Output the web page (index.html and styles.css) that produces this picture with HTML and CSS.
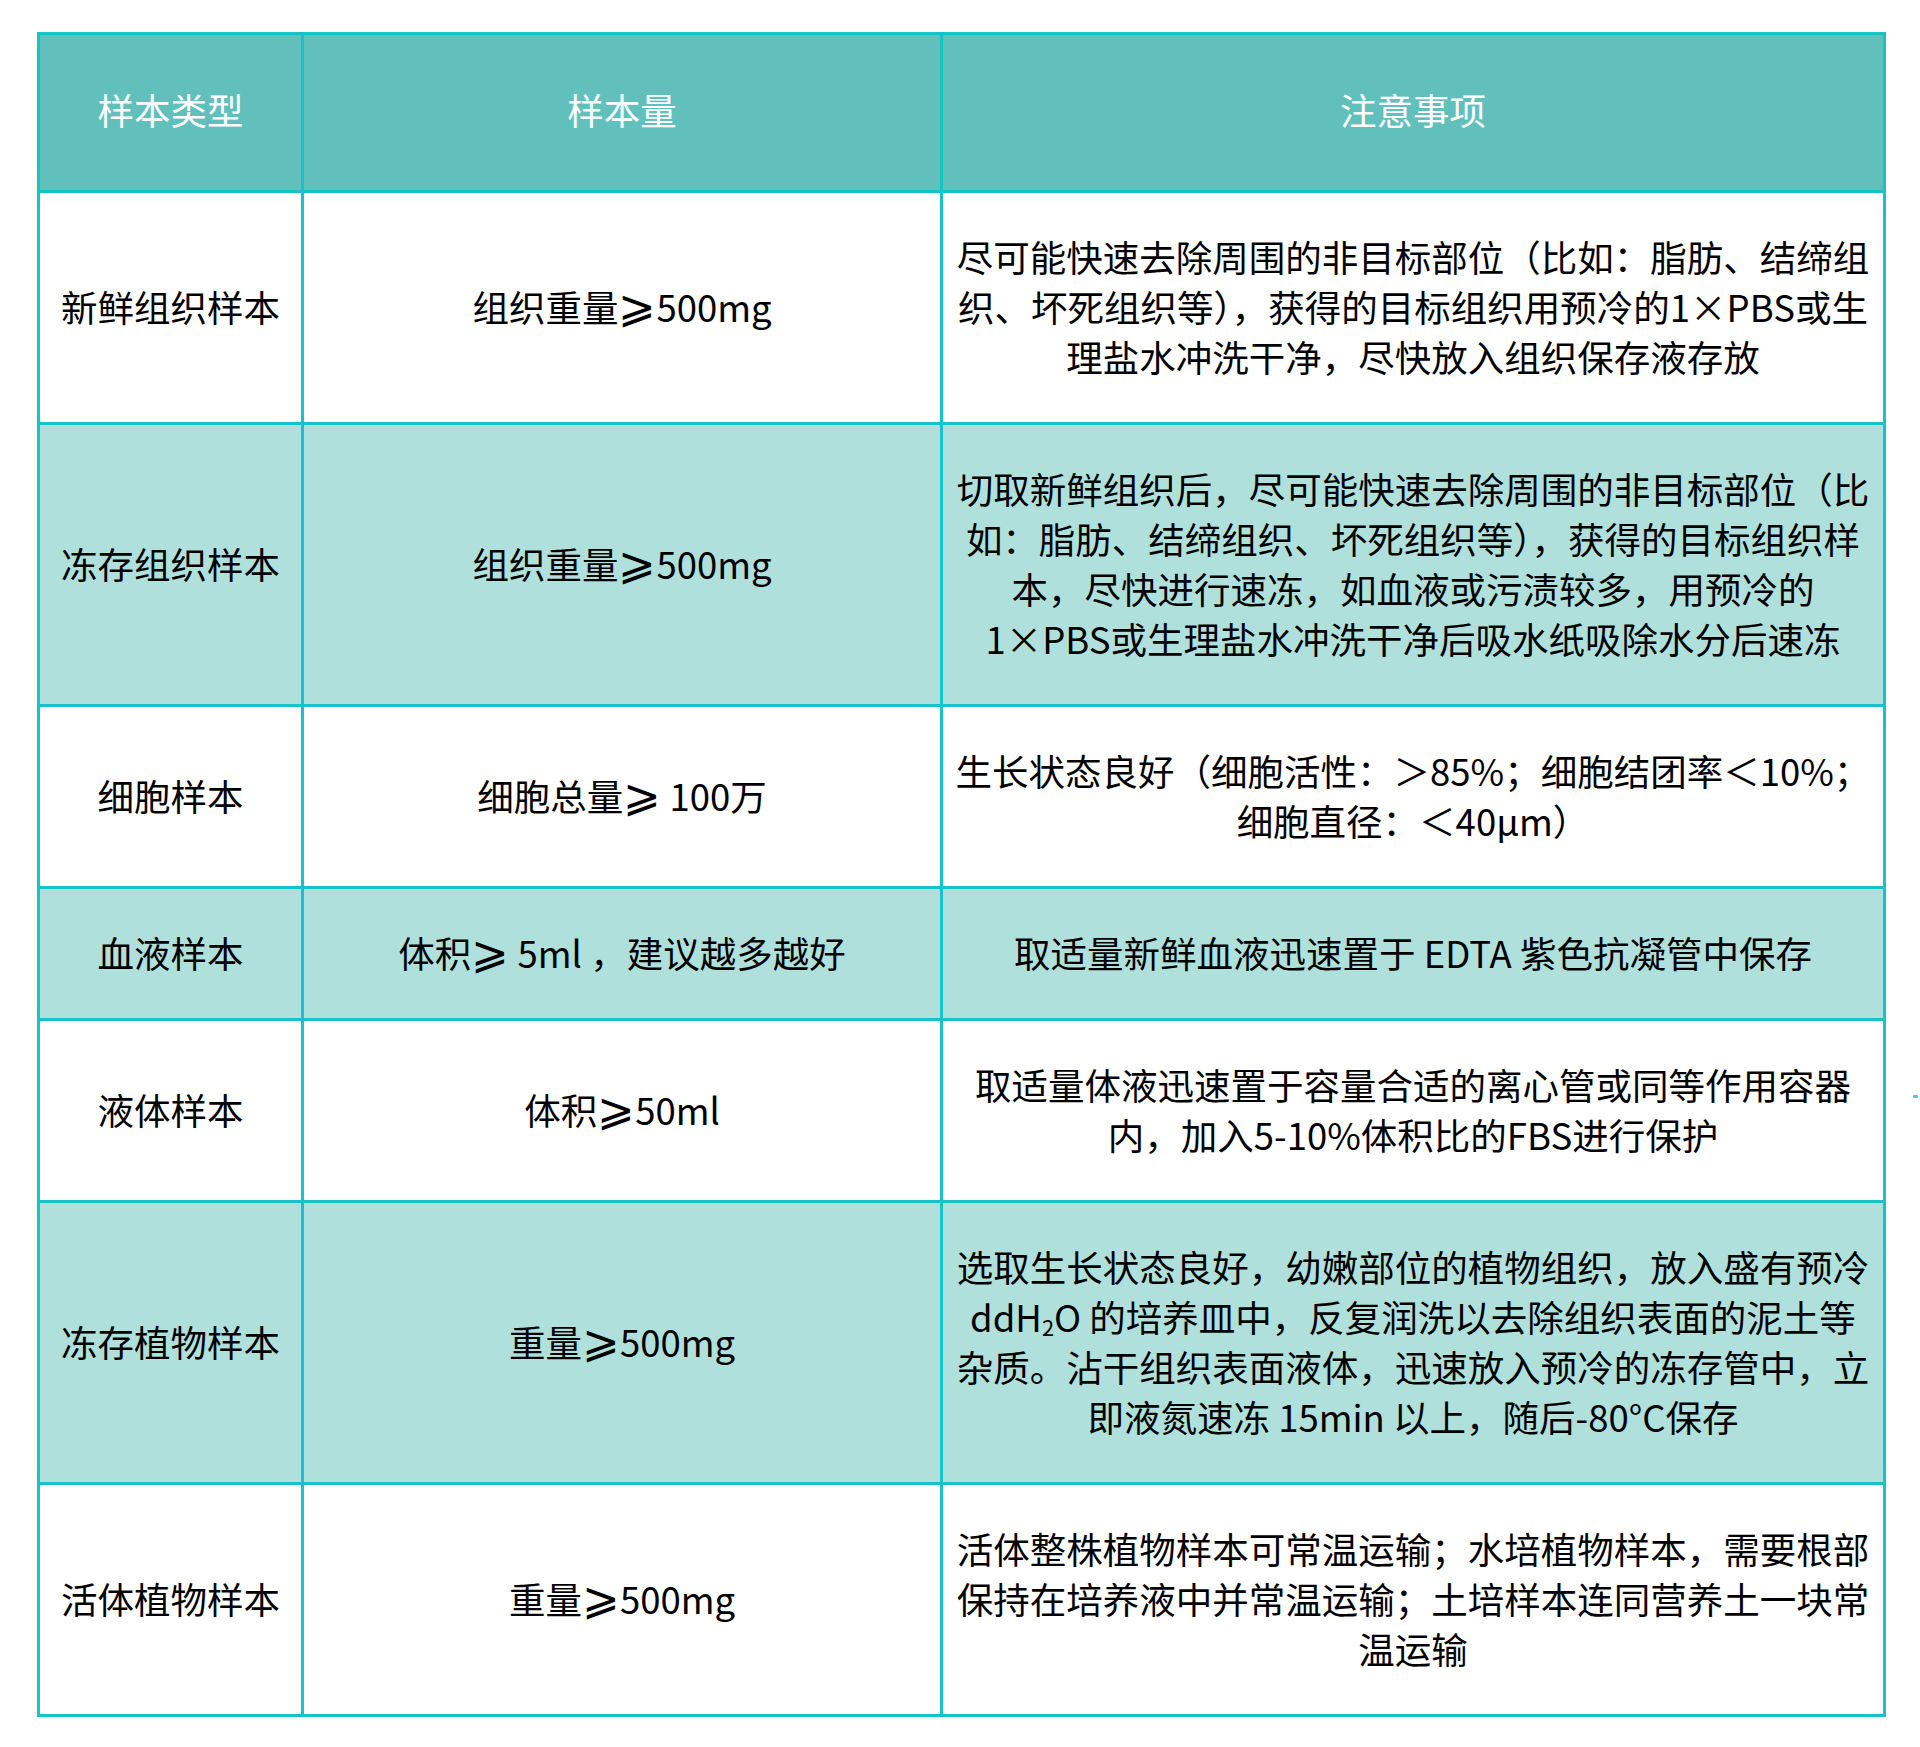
FILE: index.html
```html
<!DOCTYPE html>
<html lang="zh-CN">
<head>
<meta charset="utf-8">
<title>样本要求</title>
<link rel="stylesheet" href="styles.css">
</head>
<body>
<table class="sample-table">
  <colgroup>
    <col class="col-type">
    <col class="col-amount">
    <col class="col-note">
  </colgroup>
  <thead>
    <tr class="head-row">
      <th>样本类型</th>
      <th>样本量</th>
      <th>注意事项</th>
    </tr>
  </thead>
  <tbody>
    <tr>
      <td>新鲜组织样本</td>
      <td>组织重量<span class="ge">⩾</span>500mg</td>
      <td>尽可能快速去除周围的非目标部位（比如：脂肪、结缔组<br>织、坏死组织等），获得的目标组织用预冷的1×PBS或生<br>理盐水冲洗干净，尽快放入组织保存液存放</td>
    </tr>
    <tr class="alt">
      <td>冻存组织样本</td>
      <td>组织重量<span class="ge">⩾</span>500mg</td>
      <td>切取新鲜组织后，尽可能快速去除周围的非目标部位（比<br>如：脂肪、结缔组织、坏死组织等），获得的目标组织样<br>本，尽快进行速冻，如血液或污渍较多，用预冷的<br>1×PBS或生理盐水冲洗干净后吸水纸吸除水分后速冻</td>
    </tr>
    <tr>
      <td>细胞样本</td>
      <td>细胞总量<span class="ge">⩾</span> 100万</td>
      <td>生长状态良好（细胞活性：＞85%；细胞结团率＜10%；<br>细胞直径：＜40μm）</td>
    </tr>
    <tr class="alt">
      <td>血液样本</td>
      <td>体积<span class="ge">⩾</span> 5ml ，建议越多越好</td>
      <td>取适量新鲜血液迅速置于 EDTA 紫色抗凝管中保存</td>
    </tr>
    <tr>
      <td>液体样本</td>
      <td>体积<span class="ge">⩾</span>50ml</td>
      <td>取适量体液迅速置于容量合适的离心管或同等作用容器<br>内，加入5-10%体积比的FBS进行保护</td>
    </tr>
    <tr class="alt">
      <td>冻存植物样本</td>
      <td>重量<span class="ge">⩾</span>500mg</td>
      <td>选取生长状态良好，幼嫩部位的植物组织，放入盛有预冷<br>ddH<sub>2</sub>O 的培养皿中，反复润洗以去除组织表面的泥土等<br>杂质。沾干组织表面液体，迅速放入预冷的冻存管中，立<br>即液氮速冻 15min 以上，随后-80°C保存</td>
    </tr>
    <tr>
      <td>活体植物样本</td>
      <td>重量<span class="ge">⩾</span>500mg</td>
      <td>活体整株植物样本可常温运输；水培植物样本，需要根部<br>保持在培养液中并常温运输；土培样本连同营养土一块常<br>温运输</td>
    </tr>
  </tbody>
</table>
<span class="stray-mark"></span>
</body>
</html>
```

FILE: styles.css
```css
html, body {
  margin: 0;
  padding: 0;
  background: #ffffff;
}

body {
  position: relative;
  width: 1920px;
  min-height: 1747px;
  font-family: "Noto Sans CJK SC", "Noto Sans", "DejaVu Sans", sans-serif;
  color: #000000;
}

.sample-table {
  margin: 32px 0 0 37px;
  width: 1846px;
  border-collapse: collapse;
  table-layout: fixed;
  border: 3px solid #16c3ca;
}

.col-type { width: 264px; }
.col-amount { width: 639px; }
.col-note { width: 943px; }

.sample-table th,
.sample-table td {
  border: 3px solid #16c3ca;
  text-align: center;
  vertical-align: middle;
  font-size: 36.5px;
  line-height: 50px;
  white-space: nowrap;
  padding: 39px 6px 40px;
}

.sample-table td:last-child {
  padding: 39px 10px 40px;
}

.sample-table th {
  font-weight: 400;
  color: #ffffff;
  background: #62c0bc;
  padding: 50px 6px 55px;
}

.sample-table tbody tr {
  background: #ffffff;
}

.sample-table tbody tr.alt {
  background: #afe0dc;
}

.sample-table .ge {
  font-family: "DejaVu Sans", sans-serif;
  font-size: 1.22em;
  font-weight: 200;
  line-height: 0;
}

.sample-table sub {
  font-size: 0.6em;
  line-height: 0;
  vertical-align: -0.2em;
}

.stray-mark {
  position: absolute;
  left: 1913px;
  top: 1095px;
  width: 5px;
  height: 3px;
  background: #5ec6c8;
  border-radius: 1px;
}
```
